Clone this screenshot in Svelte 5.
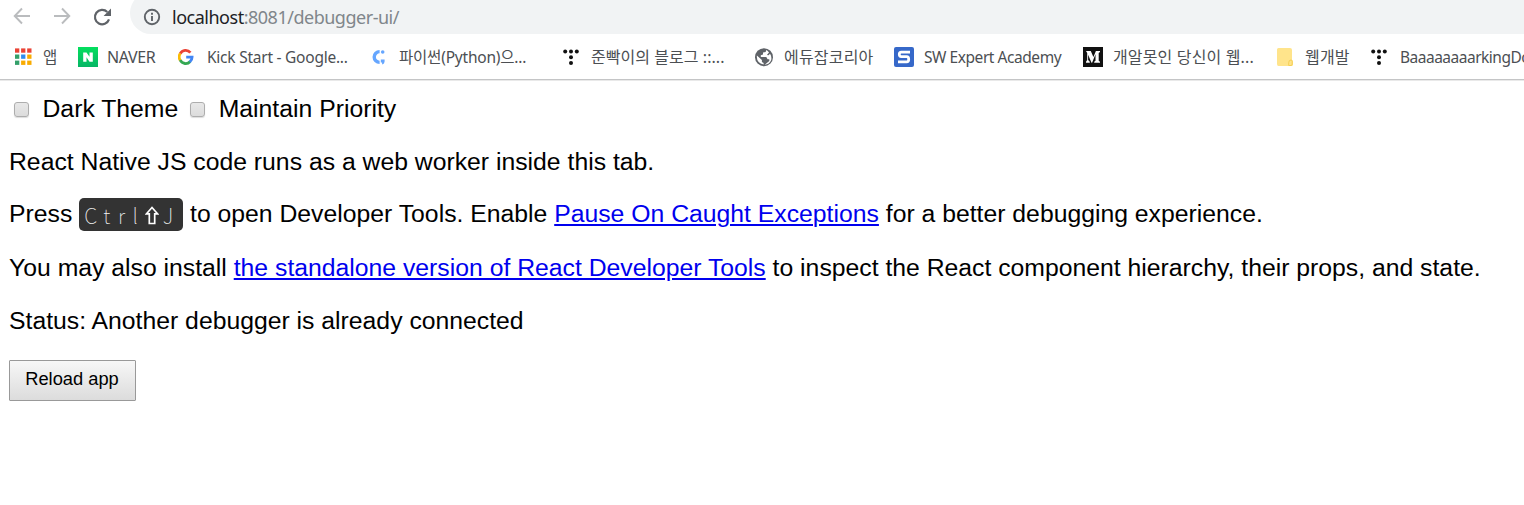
<script>
  const bookmarks = [
    { icon: 'apps', label: '앱', width: 63, gap: 8, size: 15.5, spacing: 0 },
    { icon: 'naver', label: 'NAVER', width: 100, gap: 9, size: 16, spacing: -0.35 },
    { icon: 'google', label: 'Kick Start - Google...', width: 193, gap: 9, size: 15.5, spacing: -0.24 },
    { icon: 'code', label: '파이썬(Python)으...', width: 192, gap: 8, size: 15.5, spacing: -0.2 },
    { icon: 'tistory', label: '준빡이의 블로그 ::...', width: 192, gap: 8, size: 16, spacing: 0.05 },
    { icon: 'globe', label: '에듀잡코리아', width: 139, gap: 9, size: 16, spacing: 0.2 },
    { icon: 'sw', label: 'SW Expert Academy', width: 189, gap: 10, size: 15.5, spacing: -0.45 },
    { icon: 'medium', label: '개알못인 당신이 웹...', width: 193, gap: 10, size: 16, spacing: 0.15 },
    { icon: 'folder', label: '웹개발', width: 95, gap: 9, size: 16, spacing: 0.2 },
    { icon: 'tistory', label: 'BaaaaaaaarkingDo', width: 170, gap: 9, size: 15.5, spacing: -0.5 },
  ];
  const grid = ['#ea4335', '#ea4335', '#ea4335', '#34a06a', '#2e8cf0', '#f9ab00', '#34a06a', '#f9ab00', '#f9ab00'];
</script>

<header>
  <div class="toolbar">
    <svg class="back" width="20" height="20" viewBox="0 0 20 20"><path d="M18 10H3M10 2.5 2.7 10l7.3 7.5" /></svg>
    <svg class="forward" width="20" height="20" viewBox="0 0 20 20"><path d="M2 10h15M10 2.5 17.3 10 10 17.5" /></svg>
    <svg class="reload" width="20" height="20" viewBox="0 0 20 20"><path d="M17 12.3A7.2 7.2 0 1 1 15.3 5" /><path class="fill" d="M19 1.5v7.4h-7.4z" /></svg>
    <div class="address">
      <svg width="18" height="18" viewBox="0 0 18 18"><circle cx="9" cy="9" r="7.2" /><path d="M9 8v5M9 4.8v2" /></svg>
      <span class="url"><b>localhost</b>:8081/debugger-ui/</span>
    </div>
  </div>
  <nav>
    {#each bookmarks as b}
      <a class="bookmark" href="#top" style:width="{b.width}px" style:gap="{b.gap}px">
        <svg width="20" height="20" viewBox="0 0 20 20">
          {#if b.icon === 'apps'}
            {#each grid as color, i}
              <rect x={(i % 3) * 6.1} y={1.4 + Math.floor(i / 3) * 6.1} width="4.3" height="4.3" fill={color} />
            {/each}
          {:else if b.icon === 'naver'}
            <defs><linearGradient id="green" x2="0" y2="1"><stop stop-color="#04df5e" /><stop offset="1" stop-color="#06b565" /></linearGradient></defs>
            <path fill="url(#green)" d="M0 0h20v20H0z" />
            <path fill="#fff" d="M5.2 5.5h3.3l3 4.3V5.5h3.3v9.2h-3.3l-3-4.4v4.4H5.2z" />
          {:else if b.icon === 'google'}
            <g fill="none" stroke-width="2.8">
              <path stroke="#ea4335" d="M2.2 6.7A6.1 6.1 0 0 1 12.4 5.7" />
              <path stroke="#fbbc05" d="M2.3 6.5a6.1 6.1 0 0 0 0 7" />
              <path stroke="#34a853" d="M2.2 13.2a6.1 6.1 0 0 0 10 1.3" />
              <path stroke="#4285f4" d="M8.2 10.1h5.9a6 6 0 0 1-2.3 4.8" />
            </g>
          {:else if b.icon === 'code'}
            <path fill="none" stroke="#65a6ff" stroke-width="3.4" d="M8.6 4.6a5.4 5.4 0 1 0 0 10.8" />
            <circle cx="11.7" cy="5" r="1.8" fill="#65a6ff" />
            <path fill="#65a6ff" d="M9.8 12.4h3.8v2.2q0 2.3-2.5 3v-2.2H9.8z" />
          {:else if b.icon === 'tistory'}
            {#each [[2.2, 4.6], [8, 4.6], [13.8, 4.6], [8, 10.2], [8, 15.9]] as [x, y]}
              <circle cx={x} cy={y} r="2" fill="#111" />
            {/each}
          {:else if b.icon === 'globe'}
            <circle cx="9" cy="10.2" r="9" fill="#5f6368" />
            <path fill="#fff" d="M11.4 2.9 10.6 5 8 5.4v2.2L5.8 8.2v1.9h5.5l1.3 2.2h1.7v1.7l-4.6 3.7q4.6-.2 6.5-4.7.7-3.8-1.2-6.2l-1.4 1.5-1.7-.3 2.1-2.6q-1.2-2-2.6-2.5M1.9 8.5l5 4.6v1.8l1.7 1.2v1.5Q1.2 15.7 1.9 8.5" />
          {:else if b.icon === 'sw'}
            <rect width="20" height="20" rx="2" fill="#3668c9" />
            <path fill="none" stroke="#fff" stroke-width="2.8" stroke-linejoin="round" d="M16 5.1H7.3q-2 0-2 2.2t2 2.3h5.4q2 0 2 2.6t-2 2.6H4" />
          {:else if b.icon === 'medium'}
            <path fill="#111" d="M0 0h20v20H0z" />
            <path fill="#fff" d="M3 4h4.8l2.6 6 2.5-6H17v1l-1.3 1v7.8l1.3 1v1h-5.8v-1l1.3-1V7.2L9.1 15.7h-.6L5.1 7.8v5.3l1.7 1.7v1H3v-1l1.2-1.7V6z" />
          {:else}
            <path fill="#ffe48b" d="M2.5 1H14q2 0 2 2v10q1 0 1 1.5v3q0 1.5-1.5 1.5h-13Q1 19 1 17V2.5Q1 1 2.5 1" />
            <path fill="#ffe48b" stroke="#f5cf55" d="M15 13q-2.3 0-2.3 2.8V18.5h2.5q1 0 1-1.5v-2.5q0-1.5-1.2-1.5" />
          {/if}
        </svg>
        <span style:font-size="{b.size}px" style:letter-spacing="{b.spacing}px">{b.label}</span>
      </a>
    {/each}
  </nav>
</header>

<main id="top">
  <div class="options">
    <label><input type="checkbox" />Dark Theme</label>
    <label><input type="checkbox" />Maintain Priority</label>
  </div>
  <p>React Native JS code runs as a web worker inside this tab.</p>
  <p class="shortcut">Press <kbd><span>C</span><span>t</span><span>r</span><span>l</span><svg width="14" height="19" viewBox="0 0 14 19"><path d="M7 1.5 1.5 7.8h2.8v9.7h5.4V7.8h2.8z" /></svg><span>J</span></kbd> to open Developer Tools. Enable <a href="#top">Pause On Caught Exceptions</a> for a better debugging experience.</p>
  <p>You may also install <a href="#top">the standalone version of React Developer Tools</a> to inspect the React component hierarchy, their props, and state.</p>
  <p>Status: Another debugger is already connected</p>
  <button>Reload app</button>
</main>

<style>
  :global(body) { margin: 0; background: #fff; overflow: hidden; }
  header { height: 79px; border-bottom: 1px solid #c4c5c6; box-shadow: 0 1px #e9e9e9; overflow: hidden; font-family: "Noto Sans", "Noto Sans CJK KR", sans-serif; }
  svg { display: block; flex: none; }
  .toolbar { display: flex; height: 34px; padding-left: 12px; box-sizing: border-box; }
  .toolbar > svg { margin: 6px 20px 0 0; fill: none; stroke: #babcbe; stroke-width: 1.9; }
  .toolbar > .reload { margin: 7px 18px 0 0; stroke: #5f6368; stroke-width: 2.2; }
  .toolbar .fill { fill: #5f6368; stroke: none; }
  .address { flex: 1; display: flex; align-items: center; height: 42px; box-sizing: border-box; margin-top: -8px; padding: 8px 0 0 13px; gap: 11px; border-radius: 21px 0 0 21px; background: #f1f3f4; }
  .address svg { fill: none; stroke: #5f6368; stroke-width: 1.9; }
  .url { color: #80868b; font-size: 18px; letter-spacing: -.49px; white-space: nowrap; line-height: 34px; }
  .url b { color: #202124; font-weight: 400; }
  nav { display: flex; height: 45px; padding-left: 15px; align-items: center; }
  .bookmark { display: flex; flex: none; align-items: center; color: #4c4f53; text-decoration: none; white-space: nowrap; line-height: 24px; }
  main { padding: 15px 9px 0; font: 24.75px/28px "Liberation Sans", Arial, sans-serif; color: #000; white-space: nowrap; }
  .options { display: flex; gap: 12px; padding-left: 5px; }
  label { display: flex; align-items: center; gap: 13.5px; }
  input { appearance: none; width: 15px; height: 15px; margin: 1px 0 0; border: 1px solid #adadad; border-radius: 3px; background: linear-gradient(#e8e8e8, #dcdcdc); box-shadow: 0 1px 1px #ddd; }
  p { height: 28px; margin: 25.3px 0 0; }
  .shortcut { margin-top: 24px; }
  main a { color: #00e; text-decoration-thickness: 2px; text-underline-offset: 2px; }
  kbd { display: inline-grid; grid-template-columns: 15px 17px 13px 14px 20px 12px; align-items: center; justify-items: center; width: 104px; height: 33px; box-sizing: border-box; padding: 2px 3px 0 4px; margin: -6px 0; vertical-align: -2px; border-radius: 5px; background: #333; color: #f4f4f4; font: 100 21px/28px "Noto Sans CJK KR", "DejaVu Sans Mono", monospace; }
  kbd svg { fill: none; stroke: #fff; stroke-width: 1.7; }
  button { display: block; width: 127px; height: 41px; margin: 25.1px 0 0; padding: 0 1px 2px 0; border: 1px solid #999; border-radius: 1px; background: linear-gradient(#f7f7f7, #dcdcdc); color: #000; font: 18.3px "Liberation Sans", Arial, sans-serif; }
</style>
